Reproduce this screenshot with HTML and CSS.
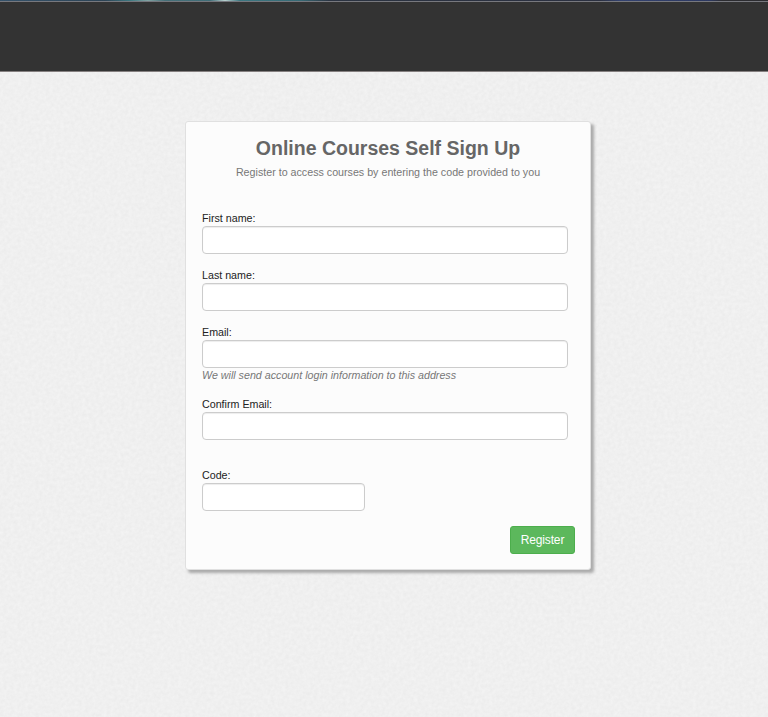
FILE: index.html
```html
<!DOCTYPE html>
<html lang="en">
<head>
  <meta charset="UTF-8">
  <meta name="viewport" content="width=device-width, initial-scale=1.0">
  <title>Online Courses Self Sign Up</title>
  <link rel="stylesheet" href="styles.css">
</head>
<body>
  <!-- Paper texture behind the page -->
  <svg class="texture" aria-hidden="true">
    <filter id="paper" x="0" y="0" width="100%" height="100%" color-interpolation-filters="sRGB">
      <feTurbulence type="fractalNoise" baseFrequency="0.28" numOctaves="3" stitchTiles="stitch"/>
      <feColorMatrix values="0.04 0 0 0 0.919  0.04 0 0 0 0.919  0.04 0 0 0 0.919  0 0 0 0 1"/>
    </filter>
    <rect width="100%" height="100%" filter="url(#paper)"/>
  </svg>

  <div class="banner"></div>
  <div class="header"></div>

  <div class="signup-card">
    <h1 class="title">Online Courses Self Sign Up</h1>
    <p class="subtitle">Register to access courses by entering the code provided to you</p>

    <form class="signup-form">
      <div class="field">
        <label for="firstName">First name:</label>
        <input type="text" id="firstName" class="form-control">
      </div>
      <div class="field">
        <label for="lastName">Last name:</label>
        <input type="text" id="lastName" class="form-control">
      </div>
      <div class="field field-email">
        <label for="email">Email:</label>
        <input type="text" id="email" class="form-control">
        <span class="hint">We will send account login information to this address</span>
      </div>
      <div class="field field-confirm">
        <label for="confirmEmail">Confirm Email:</label>
        <input type="text" id="confirmEmail" class="form-control">
      </div>
      <div class="field field-code">
        <label for="code">Code:</label>
        <input type="text" id="code" class="form-control">
      </div>
      <div class="actions">
        <button type="button" class="btn-register">Register</button>
      </div>
    </form>
  </div>
</body>
</html>
```
FILE: styles.css
```css
* {
  box-sizing: border-box;
}

body {
  margin: 0;
  height: 717px;
  overflow: hidden;
  background-color: #efefef;
  color: #222;
  font-family: "Liberation Sans", Arial, Helvetica, sans-serif;
  font-size: 10.7px;
  line-height: 15px;
}

.texture {
  position: absolute;
  top: 0;
  left: 0;
  width: 100%;
  height: 100%;
  z-index: -1;
}

.banner {
  height: 1px;
  background: linear-gradient(to right, #35526a 0, #2c4355 105px, #3c7880 130px, #82a3a3 148px, #456f78 165px, #3f6d77 210px, #b9d0ce 225px, #3b7680 240px, #366a75 300px, #2b3341 330px, #2b3040 600px, #33426f 620px, #2c3860 710px, #2c2c30 722px);
}

.header {
  height: 71px;
  background-color: #333;
  border-top: 1px solid #77787e;
  border-bottom: 1px solid #858080;
}

.signup-card {
  width: 406px;
  height: 449px;
  margin: 49px 0 0 185px;
  padding: 14px 16px 0;
  background-color: #fcfcfc;
  border: 1px solid #e0e0e0;
  border-radius: 3px;
  box-shadow: 3px 3px 3px #aaa;
}

.title {
  margin: 0;
  font-size: 19.5px;
  line-height: 24px;
  font-weight: bold;
  text-align: center;
  color: #666;
}

.subtitle {
  margin: 5px 0 0;
  text-align: center;
  color: #777;
}

.signup-form {
  margin-top: 31px;
}

.field {
  display: flex;
  flex-direction: column;
  height: 57px;
}

.field-email {
  height: 72px;
}

.field-confirm {
  height: 71px;
}

.field-code {
  height: 58px;
}

.form-control {
  width: 366px;
  height: 28px;
  padding: 4px 8px;
  font: inherit;
  background-color: #fff;
  border: 1px solid #ccc;
  border-radius: 4px;
  box-shadow: inset 0 1px 1px rgba(0, 0, 0, 0.075);
}

.field-code .form-control {
  width: 163px;
}

.hint {
  font-style: italic;
  color: #777;
}

.actions {
  display: flex;
  justify-content: flex-end;
  margin-right: -1px;
}

.btn-register {
  width: 65px;
  height: 28px;
  padding: 0;
  font-family: inherit;
  font-size: 12px;
  letter-spacing: -0.15px;
  color: #fff;
  background-color: #5cb85c;
  border: 1px solid #4cae4c;
  border-radius: 3px;
}
```
